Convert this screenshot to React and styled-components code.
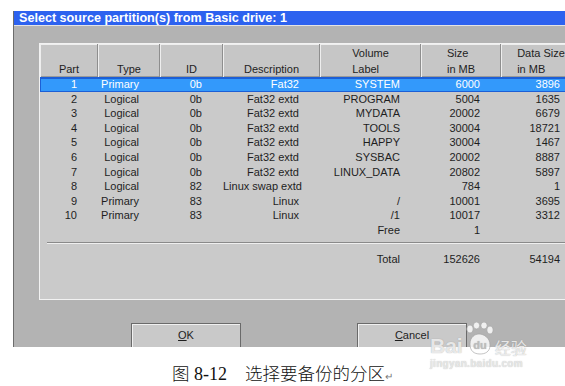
import React from "react";
import styled, { createGlobalStyle } from "styled-components";

const Global = createGlobalStyle`
  html, body { margin: 0; padding: 0; background: #ffffff; overflow: hidden; }
  body { width: 565px; height: 386px; }
`;

const COLS = "58px 62px 63px 97px 101px 80px 80px";
const UI_FONT = `"Liberation Sans", Arial, sans-serif`;

const Page = styled.div`
  position: relative;
  width: 565px;
  height: 386px;
  overflow: hidden;
  padding: 11px 0 0 13px;
  box-sizing: border-box;
`;

const Dialog = styled.div`
  width: 600px;
  height: 336px;
  background: #b3b3b3;
  border-left: 1px solid #6c6c6c;
  overflow: hidden;
  display: flex;
  flex-direction: column;
`;

const TitleBar = styled.div`
  height: 15px;
  line-height: 15px;
  background: #2d62ef;
  border-bottom: 1px solid #e4e4e4;
  color: #ffffff;
  font: bold 12.6px ${UI_FONT};
  padding-left: 5px;
  white-space: nowrap;
`;

const Body = styled.div`
  padding: 17px 0 0 25px;
  display: flex;
  flex-direction: column;
`;

const Panel = styled.div`
  width: 560px;
  height: 255px;
  background: #cacaca;
  border: 1px solid #f2f2f2;
  border-right: none;
  font: 11px ${UI_FONT};
  color: #1e1e1e;
`;

const HeaderRow = styled.div`
  display: grid;
  grid-template-columns: ${COLS};
  height: 33px;
`;

const HeaderCell = styled.div`
  display: flex;
  align-items: flex-end;
  justify-content: center;
  background: #c6c6c6;
  box-shadow: inset -1px 0 #8e8e8e, inset 1px 1px #eeeeee, inset 0 -1px #9a9a9a;
  line-height: 16px;
`;

const HeaderText = styled.span`
  display: inline-block;
  text-align: left;
`;

const Row = styled.div`
  display: grid;
  grid-template-columns: ${COLS};
  height: 14.6px;
  line-height: 14.6px;
  box-sizing: border-box;
  background: ${(p) => (p.$selected ? "#3399fb" : "transparent")};
  color: ${(p) => (p.$selected ? "#ffffff" : "inherit")};
  box-shadow: ${(p) =>
    p.$selected ? "inset 0 0 0 1px #1c5fd6, inset 0 1px 0 1px #1c5fd6" : "none"};
`;

const Cell = styled.div`
  text-align: right;
  padding-right: 21px;
  white-space: nowrap;
`;

const Separator = styled.div`
  margin: 4px 0 0 7px;
  height: 1px;
  background: #8a8a8a;
  border-bottom: 1px solid #efefef;
`;

const TotalRow = styled(Row)`
  margin-top: 8px;
`;

const ButtonRow = styled.div`
  display: flex;
  gap: 116px;
  padding: 23px 0 0 92px;
`;

const Button = styled.div`
  width: 108px;
  height: 24px;
  border: 1px solid #6a6a6a;
  background: #c9c9c9;
  box-shadow: inset 1px 1px #f0f0f0;
  font: 11px ${UI_FONT};
  color: #1e1e1e;
  text-align: center;
  line-height: 22px;
`;

const Key = styled.span`
  text-decoration: underline;
`;

const Caption = styled.div`
  padding: 17px 0 0 159px;
  white-space: pre;
  font: 18px "Liberation Serif", "Noto Sans CJK SC", serif;
  line-height: 18px;
  color: #111111;
`;

const Han = styled.span`
  font-family: "Noto Sans CJK SC", sans-serif;
  font-weight: 300;
  font-size: 17.5px;
`;

const Return = styled.span`
  font-size: 10px;
  color: #777777;
`;

const Watermark = styled.div`
  position: absolute;
  left: 430px;
  top: 322px;
  display: flex;
  flex-direction: column;
  align-items: flex-start;
  color: rgba(255, 255, 255, 0.75);
  text-shadow: 0 0 1px rgba(150, 150, 150, 0.9);
  pointer-events: none;
`;

const MarkLine = styled.div`
  display: flex;
  align-items: flex-end;
  gap: 1px;
  font: bold 21px "Liberation Sans", Arial, sans-serif;
  line-height: 20px;
`;

const MarkCn = styled.span`
  font: 16px "Noto Sans CJK SC", sans-serif;
  line-height: 18px;
`;

const MarkUrl = styled.div`
  font: bold 10px "Liberation Sans", Arial, sans-serif;
  margin-top: 2px;
  letter-spacing: 0.3px;
  color: rgba(235, 235, 235, 0.9);
  text-shadow: 0 0 1px rgba(170, 170, 170, 0.8);
`;

const Paw = () => (
  <svg width="30" height="34" viewBox="0 0 30 34">
    <g fill="rgba(255,255,255,0.8)" stroke="rgba(160,160,160,0.8)" strokeWidth="0.8">
      <ellipse cx="6" cy="7" rx="3.2" ry="4" />
      <ellipse cx="12.5" cy="3.5" rx="3.2" ry="3.5" />
      <ellipse cx="20" cy="3.5" rx="3.2" ry="3.5" />
      <ellipse cx="26" cy="8" rx="3.2" ry="4" />
      <path d="M6 22 C6 15 11 12 15 12 C20 12 26 16 26 23 C26 30 21 32 16 32 C10 32 6 29 6 22 Z" />
    </g>
    <text x="16" y="27" textAnchor="middle" fontFamily="Liberation Sans, Arial, sans-serif" fontWeight="bold" fontSize="11" fill="rgba(190,190,190,0.9)">du</text>
  </svg>
);

const rows = [
  ["1", "Primary", "0b", "Fat32", "SYSTEM", "6000", "3896"],
  ["2", "Logical", "0b", "Fat32 extd", "PROGRAM", "5004", "1635"],
  ["3", "Logical", "0b", "Fat32 extd", "MYDATA", "20002", "6679"],
  ["4", "Logical", "0b", "Fat32 extd", "TOOLS", "30004", "18721"],
  ["5", "Logical", "0b", "Fat32 extd", "HAPPY", "30004", "1467"],
  ["6", "Logical", "0b", "Fat32 extd", "SYSBAC", "20002", "8887"],
  ["7", "Logical", "0b", "Fat32 extd", "LINUX_DATA", "20802", "5897"],
  ["8", "Logical", "82", "Linux swap extd", "", "784", "1"],
  ["9", "Primary", "83", "Linux", "/", "10001", "3695"],
  ["10", "Primary", "83", "Linux", "/1", "10017", "3312"],
  ["", "", "", "", "Free", "1", ""],
];

const headers = [
  ["Part"],
  ["Type"],
  ["ID"],
  ["Description"],
  ["Volume", "Label"],
  ["Size", "in MB"],
  ["Data Size", "in MB"],
];

export default function App() {
  return (
    <>
      <Global />
      <Page>
        <Dialog>
          <TitleBar>Select source partition(s) from Basic drive: 1</TitleBar>
          <Body>
            <Panel>
              <HeaderRow>
                {headers.map((h, i) => (
                  <HeaderCell key={i}>
                    <HeaderText>
                      {h.map((line, j) => (
                        <div key={j}>{line}</div>
                      ))}
                    </HeaderText>
                  </HeaderCell>
                ))}
              </HeaderRow>
              {rows.map((r, i) => (
                <Row key={i} $selected={i === 0}>
                  {r.map((c, j) => (
                    <Cell key={j}>{c}</Cell>
                  ))}
                </Row>
              ))}
              <Separator />
              <TotalRow>
                <Cell />
                <Cell />
                <Cell />
                <Cell />
                <Cell>Total</Cell>
                <Cell>152626</Cell>
                <Cell>54194</Cell>
              </TotalRow>
            </Panel>
            <ButtonRow>
              <Button>
                <Key>O</Key>K
              </Button>
              <Button>
                <Key>C</Key>ancel
              </Button>
            </ButtonRow>
          </Body>
        </Dialog>
        <Caption>
          <Han>图</Han> 8-12    <Han>选择要备份的分区</Han>
          <Return>↵</Return>
        </Caption>
        <Watermark>
          <MarkLine>
            <span>Bai</span>
            <Paw />
            <MarkCn>经验</MarkCn>
          </MarkLine>
          <MarkUrl>jingyan.baidu.com</MarkUrl>
        </Watermark>
      </Page>
    </>
  );
}
